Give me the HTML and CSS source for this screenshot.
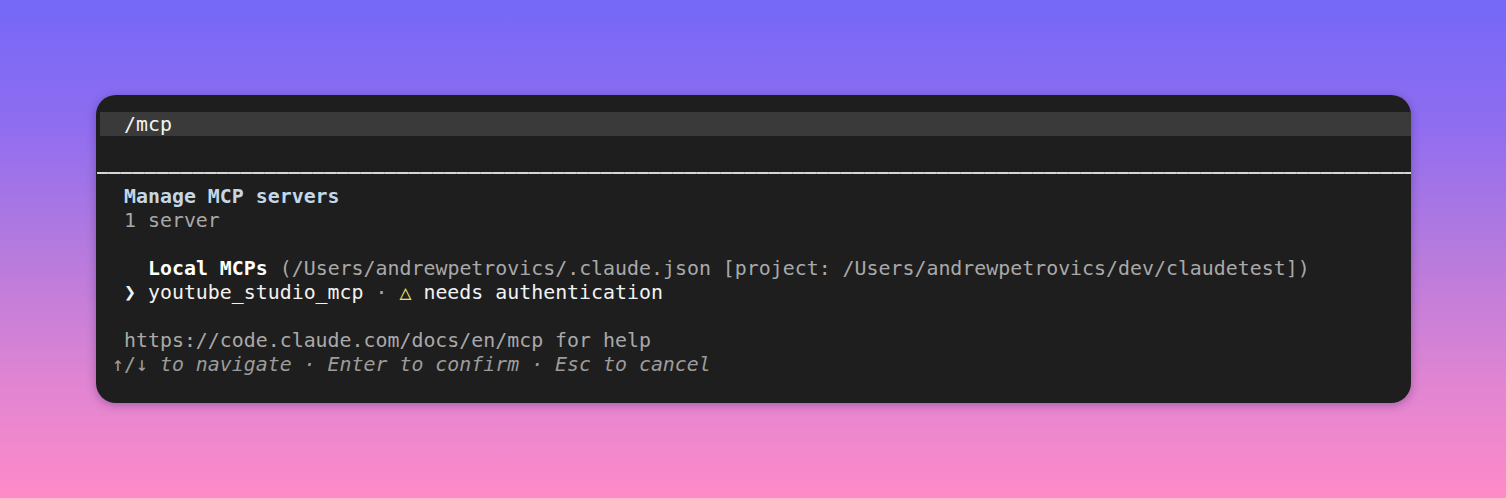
FILE: index.html
```html
<!DOCTYPE html>
<html>
<head>
<meta charset="utf-8">
<link rel="stylesheet" href="styles.css">
</head>
<body>
<div class="stage">
  <div class="term">
    <div class="line input"><span class="c2">/mcp</span></div>
    <div class="line"></div>
    <div class="rule-row"><div class="rule"></div></div>
    <div class="line"><span class="c2 title">Manage MCP servers</span></div>
    <div class="line"><span class="c2 dim">1 server</span></div>
    <div class="line"></div>
    <div class="line"><span class="c4"><b class="bright">Local MCPs</b> <span class="dim">(/Users/andrewpetrovics/.claude.json [project: /Users/andrewpetrovics/dev/claudetest])</span></span></div>
    <div class="line"><span class="c2 bright">❯ youtube_studio_mcp <span class="dim">·</span> <span class="warn">△</span> needs authentication</span></div>
    <div class="line"></div>
    <div class="line"><span class="c2 dim">https://code.claude.com/docs/en/mcp for help</span></div>
    <div class="line"><span class="c1 dim2">↑/↓ <i>to navigate · Enter to confirm · Esc to cancel</i></span></div>
  </div>
</div>
</body>
</html>
```

FILE: styles.css
```css
html, body {
  margin: 0;
  padding: 0;
  width: 1506px;
  height: 498px;
  overflow: hidden;
}
body {
  background: linear-gradient(180deg, #7568f8 0%, #8f6df0 25%, #b57ade 50%, #e285d2 78%, #ff8ac8 100%);
  font-family: "DejaVu Sans Mono", "Liberation Mono", monospace;
}
.stage {
  padding: 95px 0 0 96px;
}
.term {
  width: 1315px;
  height: 308px;
  box-sizing: border-box;
  background: #1e1e1e;
  border-radius: 20px;
  padding: 17px 0 0 4px;
  box-shadow: 0 2px 10px rgba(40, 20, 80, 0.35);
  color: #e8e8e8;
  font-size: 19.9px;
  overflow: hidden;
}
.line {
  height: 24px;
  line-height: 23px;
  padding-top: 1px;
  box-sizing: border-box;
  white-space: pre;
  display: flex;
  align-items: center;
}
.input {
  background: #3a3a3a;
  color: #f4f4f4;
}
.rule-row {
  height: 24px;
  display: flex;
  align-items: center;
  padding-top: 1px;
  box-sizing: border-box;
  margin-left: -3px;
}
.rule {
  flex: 1;
  height: 2px;
  background: repeating-linear-gradient(90deg, #d6d6d6 0 11px, #b8b8b8 11px 12px);
}
.c1 { padding-left: 12px; }
.c2 { padding-left: 24px; }
.c4 { padding-left: 48px; }
.title {
  font-weight: bold;
  color: #c3d7e6;
}
.bright {
  color: #f2f2f2;
  font-weight: normal;
}
b.bright { font-weight: bold; color: #ffffff; }
.dim { color: #a9a9a9; }
.dim2 { color: #9c9c9c; }
.warn { color: #e5e36a; }
i { font-style: italic; }
```
